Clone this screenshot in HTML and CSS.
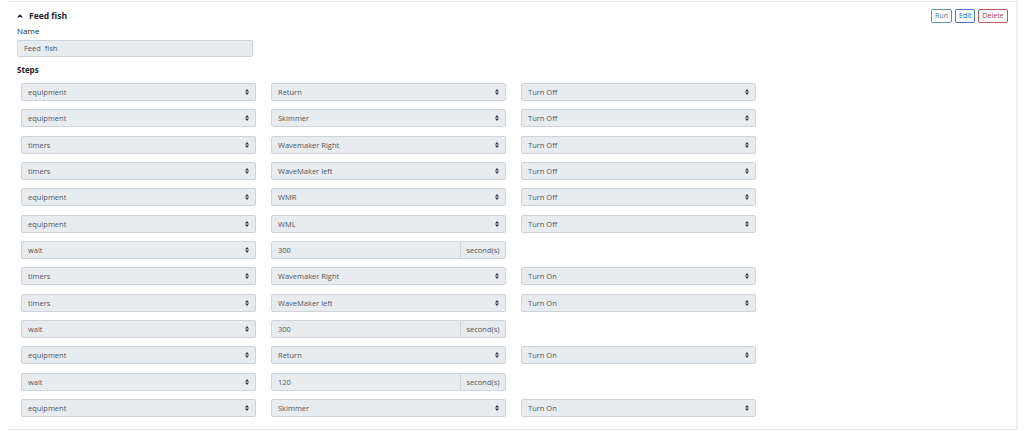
FILE: index.html
```html
<!DOCTYPE html>
<html lang="en">
<head>
  <meta charset="UTF-8">
  <title>Macros</title>
  <link rel="stylesheet" href="styles.css">
</head>
<body>
  <div class="card">
    <div class="card-header">
      <div class="title">
        <svg class="caret" width="6" height="4" viewBox="0 0 6 4"><path d="M0.8 3.4 L3 1.2 L5.2 3.4" fill="none" stroke="#222" stroke-width="1.3"/></svg>
        <span>Feed fish</span>
      </div>
      <div class="actions">
        <button class="btn btn-info">Run</button>
        <button class="btn btn-primary">Edit</button>
        <button class="btn btn-danger">Delete</button>
      </div>
    </div>
    <div class="card-body">
      <label class="label">Name</label>
      <div class="name-input">Feed&nbsp; fish</div>
      <label class="label bold">Steps</label>
      <div class="steps" id="steps"></div>
    </div>
  </div>

  <script>
    const steps = [
      ["equipment", "Return", "Turn Off"],
      ["equipment", "Skimmer", "Turn Off"],
      ["timers", "Wavemaker Right", "Turn Off"],
      ["timers", "WaveMaker left", "Turn Off"],
      ["equipment", "WMR", "Turn Off"],
      ["equipment", "WML", "Turn Off"],
      ["wait", "300"],
      ["timers", "Wavemaker Right", "Turn On"],
      ["timers", "WaveMaker left", "Turn On"],
      ["wait", "300"],
      ["equipment", "Return", "Turn On"],
      ["wait", "120"],
      ["equipment", "Skimmer", "Turn On"]
    ];

    const arrow = '<svg class="arrow" width="4" height="6" viewBox="0 0 4 6"><path d="M2 0 L4 2.4 H0 Z M2 6 L4 3.6 H0 Z" fill="#343a40"/></svg>';

    function select(text) {
      return '<div class="select"><span>' + text + '</span>' + arrow + '</div>';
    }

    const container = document.getElementById("steps");
    steps.forEach(s => {
      let html = select(s[0]);
      if (s[0] === "wait") {
        html += '<div class="input-group"><div class="ig-input">' + s[1] + '</div><div class="ig-addon">second(s)</div></div>';
      } else {
        html += select(s[1]) + select(s[2]);
      }
      const row = document.createElement("div");
      row.className = "step-row";
      row.innerHTML = html;
      container.appendChild(row);
    });
  </script>
</body>
</html>
```

FILE: styles.css
```css
* {
  box-sizing: border-box;
}

html, body {
  margin: 0;
  padding: 0;
  background: #fff;
  font-family: 'Open Sans', 'Noto Sans', sans-serif;
  color: #212529;
}

body {
  padding: 1px 6px 0 8px;
}

.card {
  border-top: 1px solid #e4e6e8;
  border-bottom: 1px solid #e4e6e8;
  border-right: 2px solid #f0f1f2;
  height: 429px;
}

.card-header {
  display: flex;
  justify-content: space-between;
  align-items: center;
  padding: 6px 8px 0 9px;
  height: 21px;
}

.title {
  display: flex;
  align-items: center;
  gap: 6px;
  font-size: 8.5px;
  font-weight: 700;
}

.caret {
  display: block;
}

.actions {
  display: flex;
  gap: 3px;
}

.btn {
  font-family: inherit;
  font-size: 7px;
  background: #fff;
  border: 1px solid;
  border-radius: 2px;
  height: 14px;
  padding: 0 3px;
  line-height: 12px;
  cursor: pointer;
}

.btn-info {
  color: #3d7f8c;
  border-color: #5e9aa6;
  width: 21px;
}

.btn-primary {
  color: #2f5fb3;
  border-color: #4a74c2;
  width: 20px;
}

.btn-danger {
  color: #a33b3b;
  border-color: #b85858;
  width: 30px;
}

.card-body {
  padding: 0 0 0 9px;
}

.label {
  display: block;
  font-size: 8px;
  line-height: 10px;
  margin-top: 3px;
}

.label.bold {
  font-weight: 700;
  margin-top: 8px;
}

.name-input {
  width: 236px;
  height: 17px;
  margin-top: 4px;
  background: #e9ecef;
  border: 1px solid #ced4da;
  border-radius: 2px;
  font-size: 7.5px;
  line-height: 15px;
  color: #50575e;
  padding-left: 6px;
}

.steps {
  display: flex;
  flex-direction: column;
  gap: 8.33px;
  margin-top: 8px;
  padding-left: 4px;
}

.step-row {
  display: flex;
  gap: 15px;
}

.select {
  width: 235px;
  height: 18px;
  background: #e9ecef;
  border: 1px solid #ced4da;
  border-radius: 2px;
  display: flex;
  align-items: center;
  justify-content: space-between;
  padding: 0 6px 0 6px;
  font-size: 7.5px;
  color: #50575e;
}

.arrow {
  display: block;
}

.input-group {
  display: flex;
  width: 235px;
  height: 18px;
}

.ig-input {
  flex: 1;
  background: #e9ecef;
  border: 1px solid #ced4da;
  border-radius: 2px 0 0 2px;
  font-size: 7.5px;
  line-height: 16px;
  color: #50575e;
  padding-left: 6px;
}

.ig-addon {
  width: 45px;
  background: #e9ecef;
  border: 1px solid #ced4da;
  border-left: none;
  border-radius: 0 2px 2px 0;
  font-size: 7.5px;
  line-height: 16px;
  color: #50575e;
  text-align: center;
}
```
